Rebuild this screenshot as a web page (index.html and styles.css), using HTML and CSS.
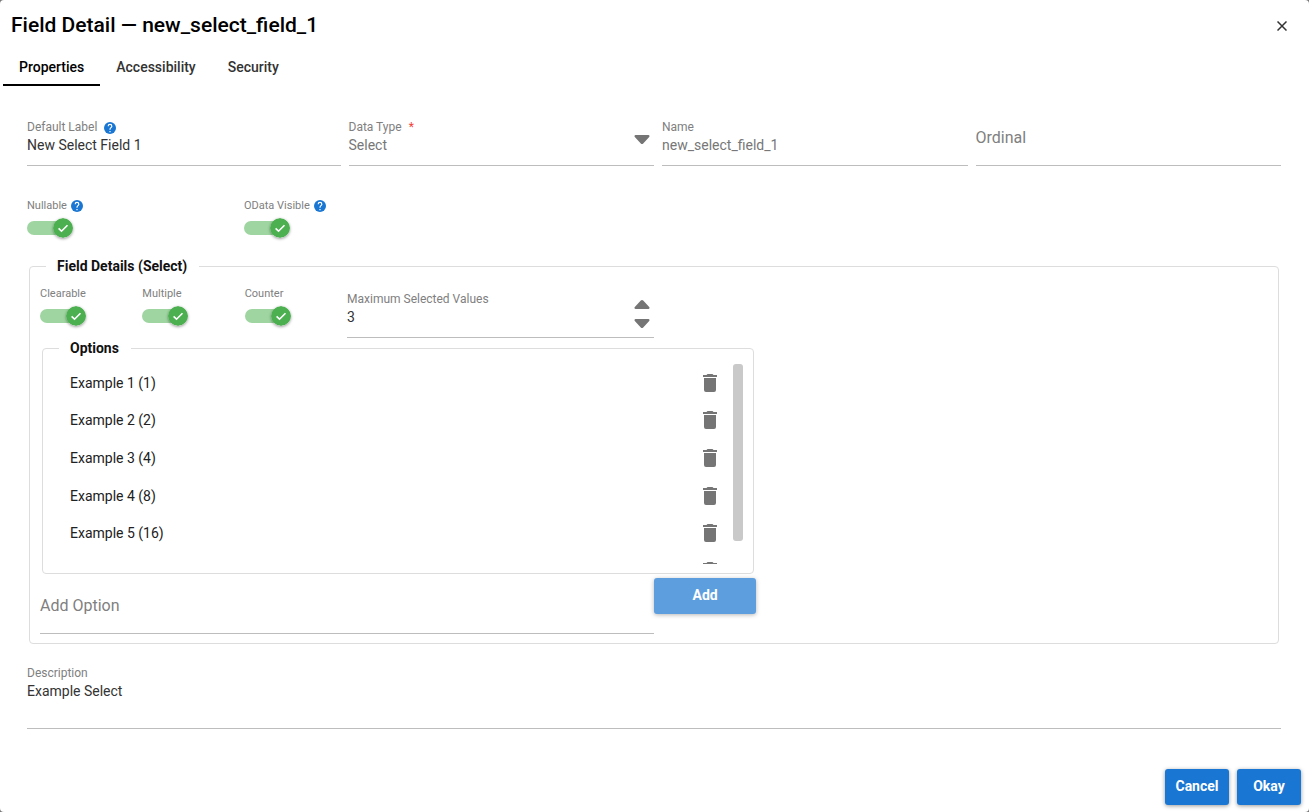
FILE: index.html
```html
<!DOCTYPE html>
<html lang="en">
<head>
    <meta charset="UTF-8">
    <meta name="viewport" content="width=device-width, initial-scale=1.0">
    <title>Field Detail</title>
    <link rel="stylesheet" href="styles.css">
</head>
<body>
    <!-- Shared icons -->
    <svg class="icon-defs" width="0" height="0" aria-hidden="true">
        <symbol id="icon-help" viewBox="2 2 20 20">
            <circle cx="12" cy="12" r="10" fill="#1976d2"/>
            <path fill="#fff" d="M15.07 11.25l-.9.92C13.45 12.89 13 13.5 13 15h-2v-.5c0-1.11.45-2.11 1.17-2.83l1.24-1.26c.37-.36.59-.86.59-1.41a2 2 0 0 0-4 0H8a4 4 0 0 1 8 0c0 .88-.36 1.67-.93 2.25zM13 19h-2v-2h2z"/>
        </symbol>
        <symbol id="icon-check" viewBox="0 0 20 20">
            <circle cx="10" cy="10" r="10" fill="#4caf50"/>
            <path fill="none" stroke="#fff" stroke-width="1.6" d="M5.6 10.4l2.9 2.8 6-6"/>
        </symbol>
        <symbol id="icon-down" viewBox="0 0 16 10">
            <path fill="#757575" d="M1.6 0h12.8c1.1 0 1.5 1.2.8 1.9L9.2 8.4c-.7.7-1.7.7-2.4 0L.8 1.9C.1 1.2.5 0 1.6 0z"/>
        </symbol>
        <symbol id="icon-trash" viewBox="0 0 24 24">
            <path fill="#757575" d="M19 4h-3.5l-1-1h-5l-1 1H5v2h14zM6 19a2 2 0 0 0 2 2h8a2 2 0 0 0 2-2V7H6z"/>
        </symbol>
    </svg>

    <main class="dialog">
        <header class="dialog-header">
            <h1>Field Detail — new_select_field_1</h1>
            <button type="button" class="close-btn" aria-label="Close">
                <svg width="10" height="10" viewBox="0 0 10 10"><path d="M0.5 0.5l9 9M9.5 0.5l-9 9" fill="none" stroke="#333" stroke-width="1.5"/></svg>
            </button>
        </header>

        <nav class="tabs">
            <a href="#properties" class="tab active">Properties</a>
            <a href="#accessibility" class="tab">Accessibility</a>
            <a href="#security" class="tab">Security</a>
        </nav>

        <form class="content" id="properties">
            <div class="field-row">
                <div class="field">
                    <div class="field-label">
                        <label for="defaultLabel">Default Label</label>
                        <svg class="help"><use href="#icon-help"/></svg>
                    </div>
                    <input type="text" id="defaultLabel" value="New Select Field 1">
                </div>
                <div class="field">
                    <div class="field-label">
                        <label for="dataType">Data Type</label>
                        <span class="required">*</span>
                    </div>
                    <select id="dataType" disabled>
                        <option>Select</option>
                    </select>
                    <svg class="select-arrow arrow"><use href="#icon-down"/></svg>
                </div>
                <div class="field">
                    <div class="field-label"><label for="name">Name</label></div>
                    <input type="text" id="name" value="new_select_field_1" disabled>
                </div>
                <div class="field empty">
                    <label for="ordinal">Ordinal</label>
                    <input type="text" id="ordinal">
                </div>
            </div>

            <div class="toggle-row">
                <div class="toggle">
                    <div class="toggle-label">
                        <label for="nullable">Nullable</label>
                        <svg class="help"><use href="#icon-help"/></svg>
                    </div>
                    <div class="switch"><input type="checkbox" id="nullable" checked><svg><use href="#icon-check"/></svg></div>
                </div>
                <div class="toggle">
                    <div class="toggle-label">
                        <label for="odata">OData Visible</label>
                        <svg class="help"><use href="#icon-help"/></svg>
                    </div>
                    <div class="switch"><input type="checkbox" id="odata" checked><svg><use href="#icon-check"/></svg></div>
                </div>
            </div>

            <fieldset class="details">
                <legend>Field Details (Select)</legend>
                <div class="grid">
                    <div class="toggle">
                        <div class="toggle-label"><label for="clearable">Clearable</label></div>
                        <div class="switch"><input type="checkbox" id="clearable" checked><svg><use href="#icon-check"/></svg></div>
                    </div>
                    <div class="toggle">
                        <div class="toggle-label"><label for="multiple">Multiple</label></div>
                        <div class="switch"><input type="checkbox" id="multiple" checked><svg><use href="#icon-check"/></svg></div>
                    </div>
                    <div class="toggle">
                        <div class="toggle-label"><label for="counter">Counter</label></div>
                        <div class="switch"><input type="checkbox" id="counter" checked><svg><use href="#icon-check"/></svg></div>
                    </div>
                    <div class="field max-values">
                        <div class="field-label"><label for="maxValues">Maximum Selected Values</label></div>
                        <input type="number" id="maxValues" value="3">
                        <div class="spinner">
                            <button type="button" aria-label="Increase"><svg class="arrow up"><use href="#icon-down"/></svg></button>
                            <button type="button" aria-label="Decrease"><svg class="arrow"><use href="#icon-down"/></svg></button>
                        </div>
                    </div>

                    <fieldset class="options">
                        <legend>Options</legend>
                        <div class="option-scroll">
                            <ul class="option-list">
                                <li>Example 1 (1)<button type="button" aria-label="Delete"><svg><use href="#icon-trash"/></svg></button></li>
                                <li>Example 2 (2)<button type="button" aria-label="Delete"><svg><use href="#icon-trash"/></svg></button></li>
                                <li>Example 3 (4)<button type="button" aria-label="Delete"><svg><use href="#icon-trash"/></svg></button></li>
                                <li>Example 4 (8)<button type="button" aria-label="Delete"><svg><use href="#icon-trash"/></svg></button></li>
                                <li>Example 5 (16)<button type="button" aria-label="Delete"><svg><use href="#icon-trash"/></svg></button></li>
                                <li><button type="button" aria-label="Delete"><svg><use href="#icon-trash"/></svg></button></li>
                            </ul>
                            <div class="scroll-thumb"></div>
                        </div>
                    </fieldset>

                    <div class="field empty add-option">
                        <label for="addOption">Add Option</label>
                        <input type="text" id="addOption">
                    </div>
                    <button type="button" class="btn add-btn" disabled>Add</button>
                </div>
            </fieldset>

            <div class="field description">
                <div class="field-label"><label for="description">Description</label></div>
                <textarea id="description">Example Select</textarea>
            </div>
        </form>

        <footer class="actions">
            <button type="button" class="btn">Cancel</button>
            <button type="submit" form="properties" class="btn">Okay</button>
        </footer>
    </main>
</body>
</html>
```
FILE: styles.css
```css
* {
    box-sizing: border-box;
}

body {
    margin: 0;
    background-color: #777;
    font-family: Roboto, sans-serif;
    font-size: 14px;
    color: #212121;
}

button,
input,
select,
textarea {
    font: inherit;
    color: inherit;
    margin: 0;
    padding: 0;
    border: none;
    background: none;
}

button {
    cursor: pointer;
}

.icon-defs {
    position: absolute;
}

.dialog {
    min-height: 100vh;
    background-color: #fff;
    border-radius: 4px;
}

.dialog-header {
    display: flex;
    align-items: center;
    justify-content: space-between;
    height: 50px;
    padding: 0 20px 0 11px;
}

.dialog-header h1 {
    margin: 0;
    font-size: 21px;
    font-weight: 500;
    color: #000;
}

.close-btn {
    display: flex;
    padding: 4px 2px 2px;
}

/* Tabs */
.tabs {
    display: flex;
    padding-left: 3px;
}

.tab {
    padding: 0 16px;
    line-height: 34px;
    font-weight: 500;
    color: #333;
    text-decoration: none;
    border-bottom: 2px solid transparent;
}

.tab.active {
    color: #000;
    border-bottom-color: #000;
}

/* Fields */
.content {
    padding: 32px 28px 0 27px;
}

.field {
    position: relative;
    min-width: 0;
}

.field-label {
    display: flex;
    align-items: center;
    gap: 7px;
    font-size: 12px;
    line-height: 18px;
    color: #808080;
}

.required {
    color: #f44336;
}

.help {
    width: 12px;
    height: 12px;
}

.field-label .help {
    margin-top: 2px;
}

.field input,
.field select,
.field textarea {
    display: block;
    width: 100%;
    height: 30px;
    padding-bottom: 11px;
    line-height: 18px;
    color: #333;
    border-bottom: 1px solid #bdbdbd;
    border-radius: 0;
    outline: none;
    appearance: none;
    opacity: 1;
}

.field input:disabled,
.field select:disabled {
    color: #777;
}

.field input[type="number"] {
    appearance: textfield;
}

/* The label sits over the empty input */
.field.empty {
    display: grid;
}

.field.empty label,
.field.empty input {
    grid-area: 1 / 1;
}

.field.empty label {
    font-size: 16px;
    line-height: 40px;
    color: #808080;
}

.field.empty input {
    height: 48px;
}

.arrow {
    display: block;
    width: 16px;
    height: 10px;
}

.arrow.up {
    transform: rotate(180deg);
}

.select-arrow,
.spinner {
    position: absolute;
    right: 4px;
}

.select-arrow {
    top: 17px;
    pointer-events: none;
}

.spinner {
    top: 9px;
    display: grid;
    gap: 10px;
}

.field-row {
    display: grid;
    grid-template-columns: repeat(4, 1fr);
}

.field-row .field + .field {
    margin-left: 8px;
}

/* Toggles */
.toggle-row {
    display: flex;
    padding-top: 32px;
}

.toggle-row .toggle {
    width: 217px;
}

.toggle-label {
    display: flex;
    align-items: center;
    gap: 4px;
    margin-bottom: 4px;
    font-size: 11px;
    line-height: 16px;
    color: #808080;
}

.switch {
    display: grid;
    align-items: center;
    width: 46px;
    height: 20px;
}

.switch input,
.switch svg {
    grid-area: 1 / 1;
}

.switch input {
    width: 46px;
    height: 14px;
    border-radius: 7px;
    background-color: #9fd5a1;
    appearance: none;
    cursor: pointer;
}

.switch svg {
    justify-self: end;
    width: 20px;
    height: 20px;
    border-radius: 50%;
    box-shadow: 0 1px 3px rgba(0, 0, 0, 0.4);
    pointer-events: none;
}

/* Field details */
fieldset {
    min-width: 0;
    border: 1px solid #ddd;
    border-radius: 4px;
}

legend {
    padding: 0 12px 0 11px;
    font-weight: 700;
    line-height: 20px;
    color: #111;
}

.details {
    margin: 18px 2px 0;
    padding: 10px 10px 9px;
}

.details > legend {
    margin-left: 6px;
}

.grid {
    display: grid;
    grid-template-columns: repeat(12, 1fr);
}

.max-values {
    grid-column: span 3;
    margin-top: 4px;
}

.options {
    grid-column: 1 / span 7;
    margin: 0 2px;
    padding: 6px 10px 9px 16px;
}

.option-scroll {
    position: relative;
    height: 200px;
    overflow-y: auto;
    scrollbar-width: none;
}

.option-list {
    display: grid;
    grid-auto-rows: 1fr;
    height: 226px;
    margin: 0;
    padding: 0 21px 0 11px;
    list-style: none;
}

.option-list li {
    display: flex;
    align-items: center;
    justify-content: space-between;
}

.option-list li button {
    margin-left: auto;
}

.option-list svg {
    display: block;
    width: 24px;
    height: 24px;
}

.scroll-thumb {
    position: absolute;
    top: 0;
    right: 0;
    width: 10px;
    height: 177px;
    background-color: #c9c9c9;
    border-radius: 3px;
}

.add-option {
    grid-column: 1 / span 6;
    margin-top: 12px;
}

.btn {
    height: 36px;
    min-width: 64px;
    padding-bottom: 2px;
    font-weight: 700;
    color: #fff;
    background-color: #1976d2;
    border-radius: 3px;
    box-shadow: 0 1px 4px rgba(0, 0, 0, 0.4);
}

.btn:disabled {
    opacity: 0.7;
}

.add-btn {
    margin-top: 4px;
}

.description {
    margin-top: 20px;
}

.description textarea {
    height: 47px;
    resize: none;
}

.actions {
    display: flex;
    justify-content: flex-end;
    gap: 8px;
    padding: 40px 8px 7px;
}
```
